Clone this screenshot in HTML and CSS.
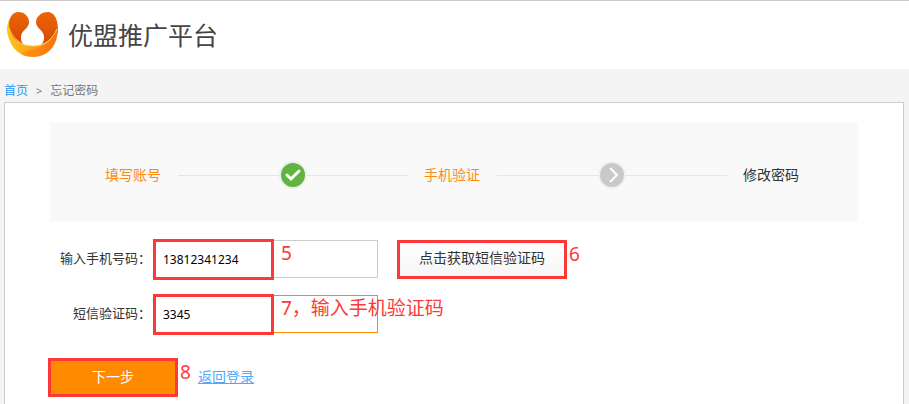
FILE: index.html
```html
<!DOCTYPE html>
<html lang="zh-CN">
<head>
    <meta charset="UTF-8">
    <title>忘记密码</title>
    <link rel="stylesheet" href="styles.css">
</head>

<body>
<header class="header">
    <svg class="logo" viewBox="0 0 52 46" width="52" height="46">
        <defs>
            <linearGradient id="ring" x1="0" y1="0" x2="1" y2="0">
                <stop offset="0" stop-color="#ffc51c"/>
                <stop offset=".55" stop-color="#ff9c14"/>
                <stop offset="1" stop-color="#f8640a"/>
            </linearGradient>
            <linearGradient id="inner" x1="0" y1="0" x2="0" y2="1">
                <stop offset="0" stop-color="#ee6408"/>
                <stop offset="1" stop-color="#d44a00"/>
            </linearGradient>
        </defs>
        <path d="M4 5C0 10 -1 18 1 24C4 36 13 45 26 45C39 45 48 36 50 24C52 18 51 10 48 5L46 24C41 31 36 34 26 34C16 34 9 31 6 24Z" fill="url(#ring)"/>
        <path d="M11 0C18 0 22 5 22 10C22 17 14 18 14 25C14 29 15 31 17 33C9 30 2 23 2 13C2 5 6 0 11 0Z" fill="url(#inner)"/>
        <path d="M41 0C34 0 29 5 29 10C29 17 37 18 37 25C37 29 36 31 34 33C42 30 50 23 50 13C50 5 46 0 41 0Z" fill="url(#inner)"/>
        <path d="M14 42C20 37 30 38 38 33C43 30 47 25 50 18C52 31 42 45 26 45C21 45 17 44 14 42Z" fill="#fb7a10" opacity=".5"/>
        <path d="M2 16C5 25 13 34 26 34C39 34 46 26 50 17" fill="none" stroke="#ffd36a" stroke-width="1"/>
    </svg>
    <h1 class="title">优盟推广平台</h1>
</header>

<nav class="crumb">
    <a href="#">首页</a>
    <span class="arrow">&gt;</span>
    <span>忘记密码</span>
</nav>

<main class="box">
    <div class="steps">
        <span class="cur">填写账号</span>
        <i class="line"></i>
        <svg class="icon" viewBox="0 0 28 28" width="28" height="28">
            <circle cx="14" cy="14" r="14" fill="#eee"/>
            <circle cx="14" cy="14" r="12" fill="#5fb53f"/>
            <path d="M8 14L12 18L20 10" fill="none" stroke="#fff" stroke-width="3" stroke-linecap="round"/>
        </svg>
        <i class="line"></i>
        <span class="cur">手机验证</span>
        <i class="line"></i>
        <svg class="icon" viewBox="0 0 28 28" width="28" height="28">
            <circle cx="14" cy="14" r="14" fill="#f1f1f1"/>
            <circle cx="14" cy="14" r="12" fill="#c9c9c9"/>
            <path d="M12 7L19 14L12 21" fill="none" stroke="#fff" stroke-width="2"/>
        </svg>
        <i class="line"></i>
        <span>修改密码</span>
    </div>

    <form class="form">
        <div class="row">
            <label for="phone">输入手机号码：</label>
            <div class="field">
                <input type="text" id="phone" value="13812341234">
                <span class="mark mark-input"></span>
                <span class="note note-input">5</span>
            </div>
            <div class="field">
                <button type="button" class="btn-code">点击获取短信验证码</button>
                <span class="mark"></span>
                <span class="note note-side">6</span>
            </div>
        </div>
        <div class="row">
            <label for="code">短信验证码：</label>
            <div class="field">
                <input type="text" id="code" class="focus" value="3345">
                <span class="mark mark-input"></span>
                <span class="note note-input">7，输入手机验证码</span>
            </div>
        </div>
        <div class="row row-submit">
            <div class="field">
                <button type="submit" class="btn-next">下一步</button>
                <span class="mark"></span>
                <span class="note note-side">8</span>
            </div>
            <a href="#" class="back">返回登录</a>
        </div>
    </form>
</main>
</body>
</html>
```

FILE: styles.css
```css
*{
    padding: 0;
    margin: 0;
    box-sizing: border-box;
}
body{
    display: flex;
    flex-direction: column;
    min-height: 100vh;
    background-color: #f4f4f4;
    color: #333;
    font-family: "Noto Sans", "Noto Sans CJK SC", sans-serif;
    font-size: 14px;
}
.header{
    display: flex;
    align-items: center;
    gap: 9px;
    height: 69px;
    padding-left: 7px;
    border-top: 1px solid #ccc8c8;
    background-color: #fff;
}
.title{
    color: #444;
    font-size: 25px;
    font-weight: 400;
    line-height: 36px;
}
.crumb{
    display: flex;
    align-items: center;
    gap: 8px;
    padding: 12px 4px 1px;
    color: #777;
    font-size: 12px;
    line-height: 20px;
}
.crumb a{
    color: #1a9bfc;
    text-decoration: none;
}
.crumb .arrow{
    font-size: 11px;
}
.box{
    flex: 1;
    margin: 0 5px 0 4px;
    padding: 19px 45px 6px;
    border: 1px solid #ccc;
    border-bottom: 0;
    background-color: #fff;
}
.steps{
    display: flex;
    align-items: center;
    max-width: 808px;
    height: 100px;
    padding: 6px 59px 0 55px;
    background-color: #f9f9f9;
}
.steps span{
    padding-bottom: 2px;
}
.steps .cur{
    color: #ff8a0c;
}
.steps .line{
    flex: 1;
    height: 1px;
    background-color: #e5e5e5;
}
.steps span + .line{
    margin-left: 17px;
}
.steps .line + span{
    margin-left: 16px;
}
.form{
    display: flex;
    flex-direction: column;
    gap: 17px;
    padding-top: 18px;
}
.row{
    display: flex;
    align-items: center;
}
.row label{
    width: 103px;
    padding: 0 2px 4px 0;
    font-size: 13px;
    text-align: right;
    white-space: nowrap;
}
.field{
    position: relative;
}
.field + .field{
    margin-left: 19px;
}
.field input{
    display: block;
    width: 225px;
    height: 38px;
    padding: 0 9px;
    border: 1px solid #ccc;
    outline: none;
    background-color: #fff;
    color: #000;
    font-family: inherit;
    font-size: 12px;
}
.field .focus{
    border-color: #ff8a00;
}
.btn-code,
.btn-next{
    display: block;
    height: 38px;
    padding-bottom: 4px;
    border: 1px solid #ccc;
    font-family: inherit;
    font-size: 14px;
    cursor: pointer;
}
.btn-code{
    width: 170px;
    background: linear-gradient(#fff, #f5f5f5);
    color: #333;
}
.btn-next{
    width: 130px;
    padding-bottom: 2px;
    border: 0;
    background-color: #ff8a00;
    color: #fff;
}
.row-submit{
    margin: 8px 0 0 -2px;
}
/* red boxes and numbers over the controls */
.mark{
    position: absolute;
    left: 0;
    right: 0;
    bottom: -1px;
    height: 39px;
    border: 3px solid #fc3939;
    pointer-events: none;
}
.mark-input{
    right: auto;
    bottom: -2px;
    width: 121px;
    height: 41px;
}
.note{
    position: absolute;
    color: #fc3939;
    font-size: 19px;
    line-height: 24px;
    white-space: nowrap;
    pointer-events: none;
}
.note-input{
    left: 128px;
    top: 1px;
}
.note-side{
    left: 100%;
    bottom: 12px;
    padding-left: 3px;
}
.note-side{
    padding-left: 2px;
}
.back{
    margin-left: 20px;
    padding-bottom: 2px;
    color: #52a9f8;
}
```
